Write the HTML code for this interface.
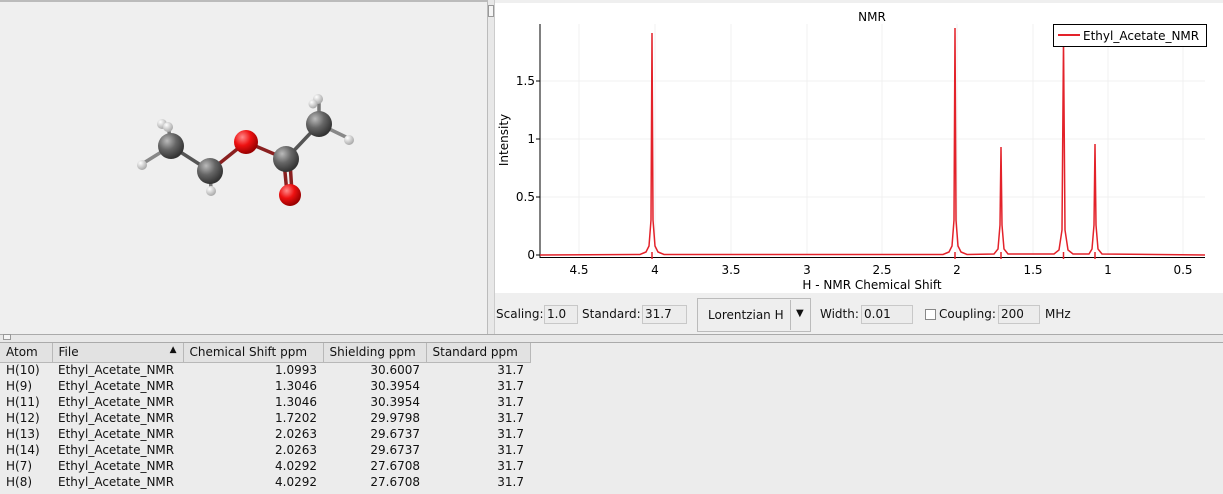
<!DOCTYPE html>
<html><head><style>
*{margin:0;padding:0;box-sizing:border-box}
body{width:1223px;height:494px;background:#efefef;font-family:"DejaVu Sans","Liberation Sans",sans-serif;font-size:12px;color:#111;position:relative;overflow:hidden}
.abs{position:absolute}
.fld{position:absolute;top:305px;height:19px;border:1px solid #c8c8c8;background:#ececec;padding:1px 2px;font-size:12px}
.lbl{position:absolute;top:307px;font-size:12px}
table{position:absolute;left:0;top:343px;border-collapse:collapse;font-size:12px}
td,th{height:16px;padding:0 6px;white-space:nowrap}
th{font-weight:normal;text-align:left;background:#e2e2e2;border-right:1px solid #b8b8b8;border-bottom:1px solid #b8b8b8;height:19px}
td.r{text-align:right}
</style></head><body>
<div class="abs" style="left:0;top:0;width:487px;height:336px;background:#efefef;border-top:2px solid #bbb"></div>
<div class="abs" style="left:487px;top:0;width:8px;height:336px;background:#e8e8e8;border-left:1px solid #bbb;border-right:1px solid #ccc"></div>
<div class="abs" style="left:488px;top:5px;width:6px;height:12px;border:1px solid #999;background:#f5f5f5"></div>
<svg class="abs" style="left:0;top:0" width="487" height="336">
<defs>
<radialGradient id="c" cx="35%" cy="30%" r="70%"><stop offset="0" stop-color="#bbb"/><stop offset=".5" stop-color="#666"/><stop offset="1" stop-color="#333"/></radialGradient>
<radialGradient id="o" cx="35%" cy="30%" r="70%"><stop offset="0" stop-color="#ff8a8a"/><stop offset=".5" stop-color="#ee1111"/><stop offset="1" stop-color="#990000"/></radialGradient>
<radialGradient id="h" cx="35%" cy="30%" r="70%"><stop offset="0" stop-color="#fff"/><stop offset="1" stop-color="#aaa"/></radialGradient>
</defs>
<g stroke-width="3.5" stroke-linecap="round">
<line x1="171" y1="146" x2="142" y2="164" stroke="#888"/>
<line x1="171" y1="146" x2="168" y2="124" stroke="#777"/>
<line x1="171" y1="146" x2="210" y2="171" stroke="#555"/>
<line x1="210" y1="171" x2="211" y2="190" stroke="#777"/>
<line x1="210" y1="171" x2="246" y2="142" stroke="#8a2020"/>
<line x1="246" y1="142" x2="286" y2="159" stroke="#8a2020"/>
<line x1="286" y1="159" x2="319" y2="124" stroke="#555"/>
<line x1="319" y1="124" x2="350" y2="139" stroke="#888"/>
<line x1="319" y1="124" x2="319" y2="102" stroke="#777"/>
<line x1="284" y1="162" x2="287" y2="193" stroke="#8a2020"/>
<line x1="290" y1="162" x2="292" y2="193" stroke="#8a2020"/>
</g>
<circle cx="162" cy="124" r="5" fill="url(#h)"/><circle cx="168" cy="127" r="5" fill="url(#h)"/>
<circle cx="142" cy="165" r="5" fill="url(#h)"/>
<circle cx="171" cy="146" r="13" fill="url(#c)"/>
<circle cx="210" cy="171" r="13" fill="url(#c)"/>
<circle cx="211" cy="191" r="5" fill="url(#h)"/>
<circle cx="246" cy="142" r="12" fill="url(#o)"/>
<circle cx="318" cy="99" r="5" fill="url(#h)"/><circle cx="313" cy="104" r="4.5" fill="url(#h)"/>
<circle cx="319" cy="124" r="13" fill="url(#c)"/>
<circle cx="349" cy="140" r="5" fill="url(#h)"/>
<circle cx="286" cy="159" r="13" fill="url(#c)"/>
<circle cx="290" cy="195" r="11" fill="url(#o)"/>
</svg>
<svg class="abs" style="left:495px;top:3px" width="728" height="290">
<rect width="728" height="290" fill="#fff"/>
<g transform="translate(-495,-3)" font-family="DejaVu Sans,sans-serif" font-size="12">
<g stroke="#f0f0f0">
<line x1="579" y1="24" x2="579" y2="255"/><line x1="655" y1="24" x2="655" y2="255"/><line x1="731" y1="24" x2="731" y2="255"/><line x1="807" y1="24" x2="807" y2="255"/><line x1="882" y1="24" x2="882" y2="255"/><line x1="957" y1="24" x2="957" y2="255"/><line x1="1033" y1="24" x2="1033" y2="255"/><line x1="1108" y1="24" x2="1108" y2="255"/><line x1="1183" y1="24" x2="1183" y2="255"/>
<line x1="540" y1="81" x2="1205" y2="81"/><line x1="540" y1="139" x2="1205" y2="139"/><line x1="540" y1="197" x2="1205" y2="197"/>
</g>
<line x1="540" y1="24" x2="540" y2="258" stroke="#000"/>
<line x1="540" y1="257.5" x2="1205" y2="257.5" stroke="#000"/>
<g stroke="#000"><line x1="536" y1="81" x2="540" y2="81"/><line x1="536" y1="139" x2="540" y2="139"/><line x1="536" y1="197" x2="540" y2="197"/><line x1="536" y1="255" x2="540" y2="255"/></g>
<g text-anchor="end"><text x="535" y="85">1.5</text><text x="535" y="143">1</text><text x="535" y="201">0.5</text><text x="535" y="259">0</text></g>
<g text-anchor="middle"><text x="579" y="274">4.5</text><text x="655" y="274">4</text><text x="731" y="274">3.5</text><text x="807" y="274">3</text><text x="882" y="274">2.5</text><text x="957" y="274">2</text><text x="1033" y="274">1.5</text><text x="1108" y="274">1</text><text x="1183" y="274">0.5</text>
<text x="872" y="289">H - NMR Chemical Shift</text><text x="872" y="21">NMR</text></g>
<text transform="translate(508,140) rotate(-90)" text-anchor="middle">Intensity</text>
<path fill="none" stroke="#e3222a" stroke-width="1.5" d="M540 255 L640 254.5 L646 252 L649 246 L651 220 L652 33 L653 220 L655 246 L658 252 L664 254.5 L943 254.5 L949 252 L952 246 L954 220 L955 28 L956 220 L958 246 L961 252 L967 254.5 L994 254 L998 249 L1000 225 L1001 147 L1002 225 L1004 249 L1008 254 L1054 254 L1059 250 L1062 230 L1063.5 40 L1065 230 L1068 250 L1073 254 L1089 254 L1092 249 L1094 225 L1095 144 L1096 225 L1098 249 L1102 254 L1205 255"/>
<g stroke="#e3222a" stroke-width="1.5"><line x1="652" y1="252" x2="652" y2="259"/><line x1="955" y1="252" x2="955" y2="259"/><line x1="1001" y1="252" x2="1001" y2="259"/><line x1="1063.5" y1="252" x2="1063.5" y2="259"/><line x1="1095" y1="252" x2="1095" y2="259"/></g>
<rect x="1053.5" y="24.5" width="153" height="22" fill="#fff" stroke="#000"/>
<line x1="1058" y1="35" x2="1080" y2="35" stroke="#e3222a" stroke-width="2"/>
<text x="1083" y="40">Ethyl_Acetate_NMR</text>
</g></svg>
<div class="lbl" style="left:496px">Scaling:</div><div class="fld" style="left:544px;width:34px">1.0</div>
<div class="lbl" style="left:582px">Standard:</div><div class="fld" style="left:642px;width:45px">31.7</div>
<div class="abs" style="left:697px;top:298px;width:114px;height:34px;border:1px solid #bbb;background:#eee;padding:9px 10px;font-size:12px;overflow:hidden;white-space:nowrap"><span style="display:inline-block;width:76px;overflow:hidden">Lorentzian H</span></div>
<div class="abs" style="left:790px;top:300px;width:1px;height:30px;background:#bbb"></div>
<div class="abs" style="left:796px;top:308px;font-size:10px">▼</div>
<div class="lbl" style="left:820px">Width:</div><div class="fld" style="left:861px;width:52px">0.01</div>
<div class="abs" style="left:925px;top:309px;width:11px;height:11px;border:1px solid #888;background:#fff"></div>
<div class="lbl" style="left:939px">Coupling:</div><div class="fld" style="left:998px;width:42px">200</div>
<div class="lbl" style="left:1045px">MHz</div>
<div class="abs" style="left:0;top:334px;width:1223px;height:9px;border-top:1px solid #aaa;border-bottom:1px solid #aaa;background:#e8e8e8"></div>
<div class="abs" style="left:3px;top:334px;width:8px;height:6px;border:1px solid #999;background:#f5f5f5"></div>
<div class="abs" style="left:0;top:343px;width:1223px;height:151px;background:#ececec"></div>
<table>
<tr><th style="width:52px">Atom</th><th style="width:131px">File<span style="float:right;font-size:9px">▲</span></th><th style="width:140px">Chemical Shift ppm</th><th style="width:103px">Shielding ppm</th><th style="width:104px">Standard ppm</th></tr>
<tr><td>H(10)</td><td>Ethyl_Acetate_NMR</td><td class="r">1.0993</td><td class="r">30.6007</td><td class="r">31.7</td></tr>
<tr><td>H(9)</td><td>Ethyl_Acetate_NMR</td><td class="r">1.3046</td><td class="r">30.3954</td><td class="r">31.7</td></tr>
<tr><td>H(11)</td><td>Ethyl_Acetate_NMR</td><td class="r">1.3046</td><td class="r">30.3954</td><td class="r">31.7</td></tr>
<tr><td>H(12)</td><td>Ethyl_Acetate_NMR</td><td class="r">1.7202</td><td class="r">29.9798</td><td class="r">31.7</td></tr>
<tr><td>H(13)</td><td>Ethyl_Acetate_NMR</td><td class="r">2.0263</td><td class="r">29.6737</td><td class="r">31.7</td></tr>
<tr><td>H(14)</td><td>Ethyl_Acetate_NMR</td><td class="r">2.0263</td><td class="r">29.6737</td><td class="r">31.7</td></tr>
<tr><td>H(7)</td><td>Ethyl_Acetate_NMR</td><td class="r">4.0292</td><td class="r">27.6708</td><td class="r">31.7</td></tr>
<tr><td>H(8)</td><td>Ethyl_Acetate_NMR</td><td class="r">4.0292</td><td class="r">27.6708</td><td class="r">31.7</td></tr>
</table>
</body></html>
